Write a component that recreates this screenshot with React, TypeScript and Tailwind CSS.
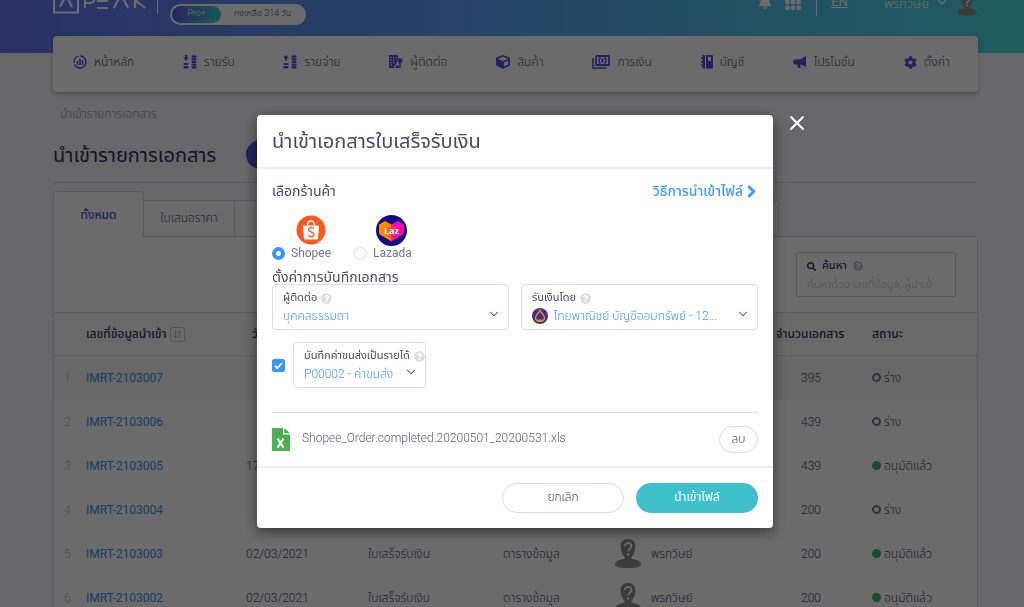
import React from 'react'
import { FaBell, FaChevronRight, FaCog, FaCube, FaQuestionCircle, FaSearch } from 'react-icons/fa'
import { BsGrid3X3GapFill } from 'react-icons/bs'
import { ChevronDown, X } from 'lucide-react'

const HomeIcon = () => (
  <svg width="14" height="14" viewBox="0 0 14 14" fill="none" stroke="currentColor">
    <circle cx="7" cy="7" r="6" strokeWidth="1.4" strokeDasharray="16 1.5 9 1.5" />
    <path d="M4.500 6v4M7 3.500V10M9.500 5v5" strokeWidth="1.500" />
  </svg>
)

const CoinsIcon = ({ up }: { up?: boolean }) => (
  <svg width="14" height="14" viewBox="0 0 14 14" fill="currentColor">
    <path d={up ? 'M3 0l3 3.200H4v2.300H2V3.200H0z' : 'M2 0h2v2.500h2L3 6 0 2.500h2z'} />
    <rect x="0.500" y="8" width="5" height="2" rx="1" />
    <rect x="0.500" y="11" width="5" height="2.500" rx="1" />
    <rect x="8.500" y="0.500" width="5" height="2.200" rx="1" />
    <rect x="8.500" y="3.200" width="5" height="2.200" rx="1" />
    <rect x="8.500" y="5.900" width="5" height="2.200" rx="1" />
    <rect x="8.500" y="8.600" width="5" height="2.200" rx="1" />
    <rect x="8.500" y="11.300" width="5" height="2.200" rx="1" />
  </svg>
)

const ContactIcon = () => (
  <svg width="14" height="14" viewBox="0 0 14 14" fill="currentColor">
    <path
      fillRule="evenodd"
      d="M0 0h9v4.500a3 3 0 0 0-1.500 3v1.500L5.500 11v2H0zM1.500 2v1.300h1.300V2zM4 2v1.300h1.300V2zM6.300 2v1.300h1.200V2zM1.500 4.500v1.300h1.300V4.500zM4 4.500v1.300h1.300V4.500zM1.500 7v1.300h1.300V7zM4 7v1.300h1.300V7zM1.500 9.500v1.300h1.300V9.500z"
    />
    <circle cx="11" cy="5.500" r="2.500" />
    <path d="M10.300 7h1.400v6h-1.400zM6.500 13c0-2 1-3 2-3s1.500 1 1.500 3z" />
  </svg>
)

const MoneyIcon = () => (
  <svg width="18" height="14" viewBox="0 0 18 14" fill="none" stroke="currentColor">
    <path d="M1 3v10h14" strokeWidth="1.600" />
    <rect x="4" y="1" width="13" height="9" rx="0.500" strokeWidth="1.800" />
    <path d="M8.500 2.500c-2 1.500-2 4.500 0 6M12.500 2.500c2 1.500 2 4.500 0 6" strokeWidth="1.600" />
    <path d="M10.500 3.500v4" strokeWidth="2" />
  </svg>
)

const BookIcon = () => (
  <svg width="12" height="14" viewBox="0 0 12 14" fill="currentColor">
    <path d="M1.500 0H4v13.500H1.500V11H0V9.500h1.500v-2H0V6h1.500V4H0V2.500h1.500z" />
    <path fillRule="evenodd" d="M5 0h6a1 1 0 0 1 1 1v11.500a1 1 0 0 1-1 1H5zM7 2v4h3V2z" />
  </svg>
)

const HornIcon = () => (
  <svg width="14" height="14" viewBox="0 0 14 14" fill="currentColor">
    <path d="M13 1v11L7.500 9.500H7l1 3.500H5L4 9.500H2L0 8V6l1.500-1.500H7z" />
  </svg>
)

const Avatar = ({ className }: { className?: string }) => (
  <svg className={className} width="26" height="29" viewBox="0 0 26 29" fill="#8d8d8d">
    <path d="M13 0c4.800 0 7.400 3 7.400 7.500 0 2.500-.5 5-1.600 7.200-.8 1.600-1.800 2.700-2.300 3.300v1.500c3.500 1 6.500 1.700 8 3.300.9 1 1.500 2 1.500 2.900 0 1.800-4 3.300-13 3.300S0 27.500 0 25.700c0-.9.600-1.900 1.500-2.900 1.500-1.600 4.500-2.300 8-3.300V18c-.5-.6-1.500-1.700-2.300-3.300A16 16 0 0 1 5.600 7.500C5.600 3 8.200 0 13 0z" />
    <path d="M9.800 7.200c0-2 1.300-3.200 3.300-3.200s3.300 1.200 3.300 3c0 2.600-3.200 2.600-3.200 5.500" fill="none" stroke="#fff" strokeWidth="1.800" />
    <circle cx="13.200" cy="15.500" r="1.200" fill="#fff" />
  </svg>
)

const ShopeeLogo = () => (
  <svg width="30" height="30" viewBox="0 0 30 30">
    <circle cx="15" cy="15" r="14.500" fill="#ff5722" />
    <path d="M7 10.500h16l-.9 12.500a1.600 1.600 0 0 1-1.600 1.500h-11A1.600 1.600 0 0 1 7.900 23z" fill="#fff" />
    <path d="M11.500 10.500c.2-2.800 1.600-4.500 3.500-4.500s3.300 1.700 3.500 4.500" fill="none" stroke="#fff" strokeWidth="1.300" />
    <path d="M17.800 13.500c-2-1.600-5.300-1.100-5.300 1.200 0 2.900 5.600 2 5.600 4.900 0 2.500-3.900 2.900-6 .9" fill="none" stroke="#ff5722" strokeWidth="1.300" />
  </svg>
)

const LazadaLogo = () => (
  <svg width="31" height="31" viewBox="0 0 31 31">
    <circle cx="15.500" cy="15.500" r="15.500" fill="#0f0c86" />
    <path d="M3 9.500L9 6l6.500 3.500V26.500L4 19.500c-.6-.4-1-1-1-1.700z" fill="#ff8a00" />
    <path d="M28 9.500L22 6l-6.500 3.500V26.500L27 19.500c.6-.4 1-1 1-1.700z" fill="#f90aa8" />
    <path d="M7 15l8.500-6 8.500 6-8.500 11.500z" fill="#ff3d4f" opacity="0.500" />
    <text x="15.500" y="18.500" textAnchor="middle" fontFamily="Open Sans, sans-serif" fontWeight="700" fontSize="9" fill="#fff">Laz</text>
  </svg>
)

const BankLogo = () => (
  <svg width="16" height="16" viewBox="0 0 16 16">
    <circle cx="8" cy="8" r="8" fill="#4e2a84" />
    <path d="M8 2.500c.8 2.500 4.500 4 4.500 7.300 0 1.500-1.200 2.700-2.500 2.700H6c-1.300 0-2.500-1.200-2.500-2.700C3.500 6.500 7.200 5 8 2.500z" fill="none" stroke="#d99a2b" strokeWidth="1.300" />
    <path d="M8 11v3M5.500 13.500h5" stroke="#d99a2b" strokeWidth="1.200" />
  </svg>
)

const ExcelIcon = () => (
  <svg width="18" height="23" viewBox="0 0 18 23">
    <path d="M0 0h11v6.500h7V23H0z" fill="#4caf50" />
    <path d="M12.300 0L18 5.300h-5.700z" fill="#4caf50" />
    <path d="M5.500 10.500l6 9M11.500 10.500l-6 9" stroke="#fff" strokeWidth="2.200" />
  </svg>
)

const SortIcon = () => (
  <svg width="15" height="15" viewBox="0 0 15 15" fill="none" stroke="#c4c4d0">
    <rect x="0.500" y="0.500" width="14" height="14" rx="2" />
    <path d="M5.500 3.500v7M3.500 8.800l2 2 2-2M9.500 11.500v-7M7.800 6.200l1.700-2 1.700 2" strokeWidth="1.200" />
  </svg>
)

const menus = [
  { label: 'หน้าหลัก', icon: <HomeIcon /> },
  { label: 'รายรับ', icon: <CoinsIcon /> },
  { label: 'รายจ่าย', icon: <CoinsIcon up /> },
  { label: 'ผู้ติดต่อ', icon: <ContactIcon /> },
  { label: 'สินค้า', icon: <FaCube size={14} /> },
  { label: 'การเงิน', icon: <MoneyIcon /> },
  { label: 'บัญชี', icon: <BookIcon /> },
  { label: 'โปรโมชั่น', icon: <HornIcon /> },
  { label: 'ตั้งค่า', icon: <FaCog size={13} /> },
]

const rows = [
  { id: 'IMRT-2103007', count: 395, done: false },
  { id: 'IMRT-2103006', count: 439, done: false },
  { id: 'IMRT-2103005', date: '17/03/2021', count: 439, done: true },
  { id: 'IMRT-2103004', count: 200, done: false },
  { id: 'IMRT-2103003', date: '02/03/2021', type: 'ใบเสร็จรับเงิน', source: 'ตารางข้อมูล', owner: 'พรภวิษย์', count: 200, done: true },
  { id: 'IMRT-2103002', date: '02/03/2021', type: 'ใบเสร็จรับเงิน', source: 'ตารางข้อมูล', owner: 'พรภวิษย์', count: 200, done: true },
]

const Header = () => (
  <header className="h-[85px] bg-linear-to-r from-[#6672f0] via-[#5ba5f0] to-[#48dbe2] pl-[53px] pr-[47px] text-white">
    <div className="flex h-[60px] items-center justify-between">
      <div className="flex items-center">
        <svg width="94" height="34" viewBox="0 0 94 34" fill="none" stroke="#fff" aria-label="PEAK">
          <path d="M1 7h24v24.500H1zM7 26l6-12 6 12M32 27V13h5a4 4 0 0 1 0 9h-5M44 13h11M44 20h11M44 27h11M61 27l7-14 7 14M82 11v16M92 12l-9 8 9 7" strokeWidth="2.200" />
        </svg>
        <div className="ml-2.5 h-8 w-px bg-white" />
        <div className="mt-8 ml-3 flex h-[21px] w-[136px] items-center rounded-full bg-white p-0.5 text-[9px] text-[#55556b]">
          <span className="flex h-full w-[49px] items-center justify-center rounded-full bg-linear-to-r from-[#5a55e8] to-[#35cfc0] text-white">Pro+</span>
          <span className="flex-1 text-center">คงเหลือ 314 วัน</span>
        </div>
      </div>
      <div className="flex items-center pt-3">
        <FaBell size={14} className="mb-1" />
        <BsGrid3X3GapFill size={18} className="mb-1 ml-3" />
        <div className="mb-2 ml-3.5 h-8 w-px bg-white" />
        <a href="#" className="ml-3.5 pb-1 text-[13px] font-normal underline">EN</a>
        <span className="ml-9 text-[13px]">พรภวิษย์</span>
        <ChevronDown size={14} className="mb-1 ml-1.5" />
        <Avatar className="ml-2 w-5" />
      </div>
    </div>
  </header>
)

const DocumentTable = () => (
  <table className="w-full table-fixed text-left text-xs text-[#50506a]">
    <colgroup>
      <col className="w-8" />
      <col className="w-[160px]" />
      <col className="w-[122px]" />
      <col className="w-[135px]" />
      <col className="w-[112px]" />
      <col className="w-[161px]" />
      <col className="w-[96px]" />
      <col />
    </colgroup>
    <thead>
      <tr className="h-[43px] border-y border-[#dcdce6] bg-[#f9f9fb] text-[#36335c]">
        <th />
        <th className="font-medium">
          <span className="flex items-center gap-1">เลขที่ข้อมูลนำเข้า <SortIcon /></span>
        </th>
        <th className="pl-1.5 font-medium">วันที่</th>
        <th />
        <th />
        <th />
        <th className="font-medium">จำนวนเอกสาร</th>
        <th className="font-medium">สถานะ</th>
      </tr>
    </thead>
    <tbody>
      {rows.map((row, i) => (
        <tr key={row.id} className="h-11 first:bg-[#f6f6f6]">
          <td className="pl-2.5 text-[#b8b8c0]">{i + 1}</td>
          <td><a href="#" className="font-normal text-[#3b96f0]">{row.id}</a></td>
          <td>{row.date}</td>
          <td>{row.type}</td>
          <td>{row.source}</td>
          <td>
            {row.owner && (
              <span className="flex items-center gap-2.5"><Avatar />{row.owner}</span>
            )}
          </td>
          <td className="pl-[25px]">{row.count}</td>
          <td>
            <span className="flex items-center gap-[3px]">
              <span className={row.done ? 'size-[9px] rounded-full bg-[#36b765]' : 'size-[9px] rounded-full border-2 border-[#77778a]'} />
              {row.done ? 'อนุมัติแล้ว' : 'ร่าง'}
            </span>
          </td>
        </tr>
      ))}
    </tbody>
  </table>
)

const Help = () => <FaQuestionCircle size={11} className="text-[#dcdce8]" />

const Chevron = () => <ChevronDown size={14} strokeWidth={1.8} className="pointer-events-none absolute right-[7px] bottom-2" />

const ImportModal = () => (
  <div className="fixed inset-0 flex items-start justify-center bg-black/58 pt-[115px] pl-1.5">
    <div role="dialog" aria-labelledby="modal-title" className="relative w-full max-w-[516px] rounded bg-white text-[#4a476b] shadow-[0_4px_14px_rgba(0,0,0,0.5)]">
      <button aria-label="ปิด" className="absolute -top-1 -right-9 text-white">
        <X size={24} strokeWidth={2} />
      </button>

      <div className="flex h-[54px] items-center border-b-2 border-[#efeff6] px-[15px]">
        <h2 id="modal-title" className="text-xl font-normal">นำเข้าเอกสารใบเสร็จรับเงิน</h2>
      </div>

      <div className="px-[15px] pt-3">
        <div className="flex h-5 items-center justify-between">
          <h3 className="text-sm font-normal">เลือกร้านค้า</h3>
          <a href="#" className="flex items-center gap-0.5 text-sm font-medium text-[#3d9bfb]">
            วิธีการนำเข้าไฟล์ <FaChevronRight size={13} className="stroke-current" strokeWidth={40} />
          </a>
        </div>

        <div className="mt-3.5 flex gap-[23px] text-xs text-[#77748f]">
          <label className="flex flex-col">
            <span className="flex h-[30px] justify-center pl-[18px]"><ShopeeLogo /></span>
            <span className="flex h-4 items-center gap-1.5 font-normal">
              <input type="radio" name="shop" defaultChecked className="size-[13px] appearance-none rounded-full border border-[#dedeea] checked:border-4 checked:border-[#3796fa]" />
              Shopee
            </span>
          </label>
          <label className="flex flex-col">
            <span className="flex h-[30px] justify-center pl-[18px]"><LazadaLogo /></span>
            <span className="flex h-4 items-center gap-1.5 font-normal">
              <input type="radio" name="shop" className="size-[13px] appearance-none rounded-full border border-[#dedeea] checked:border-4 checked:border-[#3796fa]" />
              Lazada
            </span>
          </label>
        </div>

        <h3 className="mt-1.5 h-[17px] text-sm font-normal">ตั้งค่าการบันทึกเอกสาร</h3>
        <div className="grid grid-cols-2 gap-3">
          <div className="relative h-[46px] rounded border border-[#dcdce8] px-2.5 pt-1">
            <div className="flex h-[18px] items-center gap-1 text-[11px] font-normal">
              <label htmlFor="contact">ผู้ติดต่อ</label><Help />
            </div>
            <select id="contact" className="block h-[18px] w-full appearance-none text-xs text-[#3d9bfb]">
              <option>บุคคลธรรมดา</option>
            </select>
            <Chevron />
          </div>
          <div className="relative h-[46px] rounded border border-[#dcdce8] px-2.5 pt-1">
            <div className="flex h-[18px] items-center gap-1 text-[11px] font-normal">
              <label htmlFor="bank">รับเงินโดย</label><Help />
            </div>
            <div className="flex items-center gap-1.5">
              <BankLogo />
              <select id="bank" className="block h-[18px] flex-1 appearance-none text-xs text-[#3d9bfb]">
                <option>ไทยพาณิชย์ บัญชีออมทรัพย์ - 12...</option>
              </select>
            </div>
            <Chevron />
          </div>
        </div>

        <div className="mt-3 flex items-center gap-2">
          <span className="relative flex">
            <input type="checkbox" defaultChecked aria-label="บันทึกค่าขนส่งเป็นรายได้" className="size-[13px] appearance-none rounded-xs border border-[#dcdce8] checked:border-[#3796fa] checked:bg-[#3796fa]" />
            <svg className="pointer-events-none absolute inset-0" width="13" height="13" viewBox="0 0 13 13" fill="none" stroke="#fff" strokeWidth="1.800">
              <path d="M3 6.800l2.300 2.400L10 4" />
            </svg>
          </span>
          <div className="relative h-[46px] w-[133px] rounded border border-[#dcdce8] pt-1 pl-2.5">
            <div className="flex h-[18px] items-center gap-1 text-[11px] font-normal whitespace-nowrap">
              <label htmlFor="income">บันทึกค่าขนส่งเป็นรายได้</label><Help />
            </div>
            <select id="income" className="block h-[18px] w-full appearance-none text-xs text-[#3d9bfb]">
              <option>P00002 - ค่าขนส่ง</option>
            </select>
            <Chevron />
          </div>
        </div>

        <div className="mt-6 flex h-[54px] items-center border-t border-[#dcdce8]">
          <ExcelIcon />
          <span className="ml-3 flex-1 pb-1 text-xs text-[#5d5a7c]">Shopee_Order.completed.20200501_20200531.xls</span>
          <button className="h-[27px] w-[39px] rounded-full border border-[#dcdce8] pb-0.5 text-xs">ลบ</button>
        </div>
      </div>

      <div className="flex justify-end gap-3 border-t-2 border-[#efeff6] p-[15px] text-xs">
        <button className="h-[30px] w-[122px] rounded-full border border-[#dcdce8] pb-0.5">ยกเลิก</button>
        <button className="h-[30px] w-[122px] rounded-full bg-[#3fc0cd] pb-0.5 font-normal text-white">นำเข้าไฟล์</button>
      </div>
    </div>
  </div>
)

export default function App() {
  return (
    <div className="h-screen overflow-hidden bg-[#f5f5f9] font-['Roboto','Noto_Sans_Thai',sans-serif] font-light">
      <div className="-mt-8">
        <Header />
        <main className="pr-[46px] pl-[53px]">
          <nav className="relative -mt-[17px] flex h-14 items-center justify-between rounded bg-white pr-7 pb-1 pl-5 text-xs text-[#55556b] shadow-[0_2px_4px_rgba(0,0,0,0.25)]">
            {menus.map((menu) => (
              <a key={menu.label} href="#" className="flex items-center gap-[7px]">
                <span className="text-[#5451e0]">{menu.icon}</span>
                {menu.label}
              </a>
            ))}
          </nav>

          <p className="mt-3.5 ml-[7px] h-4 text-xs leading-4 text-[#9a9aa6]">นำเข้ารายการเอกสาร</p>
          <div className="mt-[18px] flex h-[29px] items-center gap-[30px]">
            <h1 className="text-xl font-normal text-[#36335c]">นำเข้ารายการเอกสาร</h1>
            <button aria-label="นำเข้า" className="h-[29px] w-[120px] rounded-full bg-[#5451e0]" />
          </div>

          <div className="mt-[13px] flex items-end border-t border-[#d4d4e0] pt-2 text-xs text-[#606076]">
            <button className="relative -mb-px h-[46px] w-[91px] rounded-t border border-b-0 border-[#d4d4e0] bg-white font-medium text-[#5451e0]">ทั้งหมด</button>
            <button className="h-9 w-[91px] border-t border-r border-[#d4d4e0] bg-[#fcfcfd] pb-0.5">ใบเสนอราคา</button>
            <div className="h-9 w-[544px] rounded-tr border-t border-r border-[#d4d4e0] bg-[#fcfcfd]" />
          </div>
          <section className="rounded-tr border border-[#d4d4e0] bg-white">
            <div className="flex justify-end px-[21px] py-[15px]">
              <div className="h-[45px] w-[160px] rounded-xs border border-[#d0d0dc] px-2.5 pt-1 text-[#36335c]">
                <div className="flex h-[18px] items-center gap-1.5 text-[11px]">
                  <FaSearch size={9} />
                  <label htmlFor="search" className="font-medium">ค้นหา</label>
                  <FaQuestionCircle size={10} className="text-[#bcbcc8]" />
                </div>
                <input id="search" type="search" placeholder="ค้นหาด้วย เลขที่ข้อมูล, ผู้นำเข้า" className="block h-[18px] w-full text-[11px] placeholder:text-[#bcbcc8]" />
              </div>
            </div>
            <DocumentTable />
          </section>
        </main>
      </div>
      <ImportModal />
    </div>
  )
}
